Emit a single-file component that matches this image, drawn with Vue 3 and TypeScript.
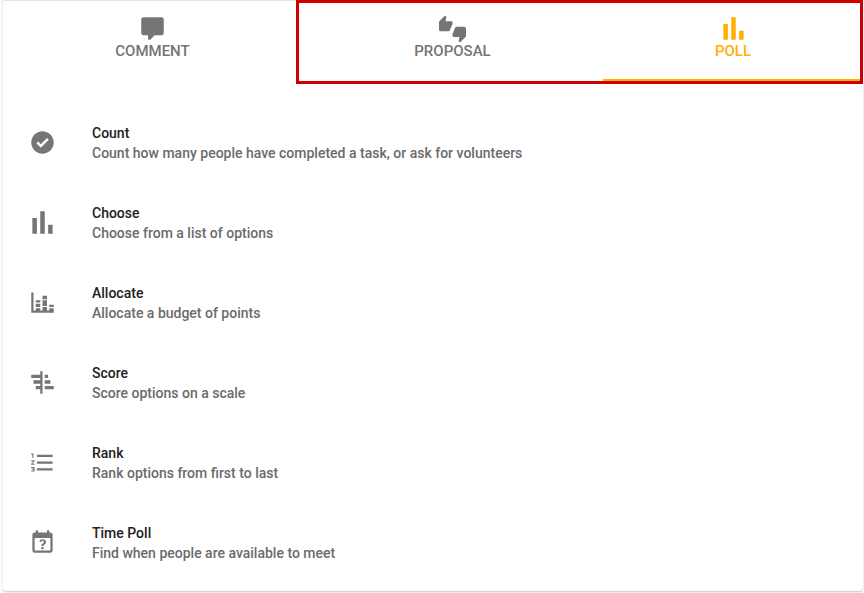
<script setup lang="ts">
import { ref } from 'vue'

interface Tab {
  label: string
  icon: string
}

interface PollType {
  title: string
  subtitle: string
  icon: string
}

const pollIcon = 'M3,22V8H7V22H3M10,22V2H14V22H10M17,22V14H21V22H17Z'

const tabs: Tab[] = [
  {
    label: 'Comment',
    icon: 'M9,22A1,1 0 0,1 8,21V18H4A2,2 0 0,1 2,16V4C2,2.89 2.9,2 4,2H20A2,2 0 0,1 22,4V16A2,2 0 0,1 20,18H13.9L10.2,21.71C10,21.9 9.75,22 9.5,22V22H9Z',
  },
  {
    label: 'Proposal',
    icon: 'M22.5,10.5H15.75C15.13,10.5 14.6,10.88 14.37,11.41L12.11,16.7C12.04,16.87 12,17.06 12,17.25V18.5A1,1 0 0,0 13,19.5H18.18L17.5,22.68V22.92C17.5,23.23 17.63,23.5 17.83,23.72L18.62,24.5L23.56,19.56C23.83,19.29 24,18.91 24,18.5V12A1.5,1.5 0 0,0 22.5,10.5M12,6.5A1,1 0 0,0 11,5.5H5.82L6.5,2.32V2.09C6.5,1.78 6.37,1.5 6.17,1.29L5.38,0.5L0.44,5.44C0.17,5.71 0,6.09 0,6.5V13A1.5,1.5 0 0,0 1.5,14.5H8.25C8.87,14.5 9.4,14.12 9.63,13.59L11.89,8.3C11.96,8.13 12,7.94 12,7.75V6.5Z',
  },
  { label: 'Poll', icon: pollIcon },
]

const pollTypes: PollType[] = [
  {
    title: 'Count',
    subtitle: 'Count how many people have completed a task, or ask for volunteers',
    icon: 'M12 2C6.5 2 2 6.5 2 12S6.5 22 12 22 22 17.5 22 12 17.5 2 12 2M10.5 16.6L6.6 12.7L8.1 11.2L10.5 13.6L16.1 8L17.6 9.5L10.5 16.6Z',
  },
  { title: 'Choose', subtitle: 'Choose from a list of options', icon: pollIcon },
  {
    title: 'Allocate',
    subtitle: 'Allocate a budget of points',
    icon: 'M22,21H2V3H4V19H6V17H10V19H12V16H16V19H18V17H22V21M18,14H22V16H18V14M12,6H16V9H12V6M16,15H12V10H16V15M6,10H10V12H6V10M10,16H6V13H10V16Z',
  },
  {
    title: 'Score',
    subtitle: 'Score options on a scale',
    icon: 'M2,5H10V2H12V22H10V18H6V15H10V13H4V10H10V8H2V5M14,5H17V8H14V5M14,10H19V13H14V10M14,15H22V18H14V15Z',
  },
  {
    title: 'Rank',
    subtitle: 'Rank options from first to last',
    icon: 'M7,13V11H21V13H7M7,19V17H21V19H7M7,7V5H21V7H7M3,8V5H2V4H4V8H3M2,17V16H5V20H2V19H4V18.5H3V17.5H4V17H2M4.25,10A0.75,0.75 0 0,1 5,10.75C5,10.95 4.92,11.14 4.79,11.27L3.12,13H5V14H2V13.08L4,11H2V10H4.25Z',
  },
  {
    title: 'Time Poll',
    subtitle: 'Find when people are available to meet',
    icon: 'M6,1V3H5C3.89,3 3,3.89 3,5V19A2,2 0 0,0 5,21H19C20.11,21 21,20.1 21,19V5C21,3.89 20.11,3 19,3H18V1H16V3H8V1H6M5,8H19V19H5V8M12.19,9C11.32,9 10.62,9.2 10.08,9.59C9.56,10 9.3,10.57 9.31,11.36L9.32,11.39H11.25C11.26,11.09 11.35,10.86 11.53,10.7C11.71,10.55 11.93,10.47 12.19,10.47C12.5,10.47 12.76,10.57 12.94,10.75C13.12,10.94 13.2,11.2 13.2,11.5C13.2,11.82 13.13,12.09 12.97,12.32C12.83,12.55 12.62,12.75 12.36,12.91C11.85,13.25 11.5,13.55 11.31,13.82C11.11,14.08 11,14.5 11,15H13C13,14.69 13.04,14.44 13.13,14.26C13.22,14.07 13.39,13.9 13.64,13.74C14.09,13.5 14.46,13.21 14.75,12.81C15.04,12.41 15.19,12 15.19,11.5C15.19,10.74 14.92,10.13 14.38,9.68C13.85,9.23 13.12,9 12.19,9M11,16V18H13V16H11Z',
  },
]

const active = ref('Poll')
</script>

<template>
  <main class="card">
    <div class="tabs" role="tablist">
      <button
        v-for="tab in tabs"
        :key="tab.label"
        type="button"
        role="tab"
        class="tab"
        :class="{ 'tab-active': tab.label === active }"
        :aria-selected="tab.label === active"
        @click="active = tab.label"
      >
        <svg class="icon" viewBox="0 0 24 24" aria-hidden="true"><path :d="tab.icon" /></svg>
        <span>{{ tab.label }}</span>
      </button>
      <div class="highlight"></div>
    </div>
    <ul class="list">
      <li v-for="poll in pollTypes" :key="poll.title">
        <button type="button" class="row">
          <svg class="icon" viewBox="0 0 24 24" aria-hidden="true"><path :d="poll.icon" /></svg>
          <span class="text">
            <span class="title">{{ poll.title }}</span>
            <span class="subtitle">{{ poll.subtitle }}</span>
          </span>
        </button>
      </li>
    </ul>
  </main>
</template>

<style>
body {
  background: #fcfcfc;
}
</style>

<style scoped>
.card {
  margin: 0 1px 2px 3px;
  padding-bottom: 8px;
  border-top: 1px solid #e4e4e4;
  border-radius: 0 0 4px 4px;
  background: #fff;
  box-shadow: 0 1px 2px rgba(0, 0, 0, 0.22);
  font-family: Roboto, "Liberation Sans", sans-serif;
  font-size: 14px;
  font-weight: 500;
  line-height: 20px;
}

.tabs {
  position: relative;
  display: grid;
  grid-template-columns: 299fr 301fr 260fr;
  font-size: 15px;
}

.tab {
  display: flex;
  flex-direction: column;
  align-items: center;
  height: 80px;
  padding: 14px 0 0;
  border: 0;
  border-bottom: 2px solid transparent;
  background: none;
  color: #757575;
  font: inherit;
  line-height: 18px;
  text-transform: uppercase;
  cursor: pointer;
}

.tab-active {
  border-bottom-color: #ffb000;
  color: #ffb000;
}

.icon {
  display: block;
  flex: none;
  width: 27px;
  height: 27px;
  fill: currentColor;
}

.highlight {
  position: absolute;
  grid-column: 2 / 4;
  inset: -1px 0 -3px -6px;
  border: 3px solid #cc0000;
  pointer-events: none;
}

.list {
  margin: 0;
  padding: 22px 0 0;
  list-style: none;
}

.row {
  display: flex;
  align-items: center;
  gap: 36px;
  width: 100%;
  height: 80px;
  padding: 0 26px 1px;
  border: 0;
  background: none;
  color: #757575;
  font: inherit;
  text-align: left;
  cursor: pointer;
}

.text {
  display: flex;
  flex-direction: column;
}

.title {
  color: #212121;
}

.subtitle {
  color: #6b6b6b;
}
</style>
